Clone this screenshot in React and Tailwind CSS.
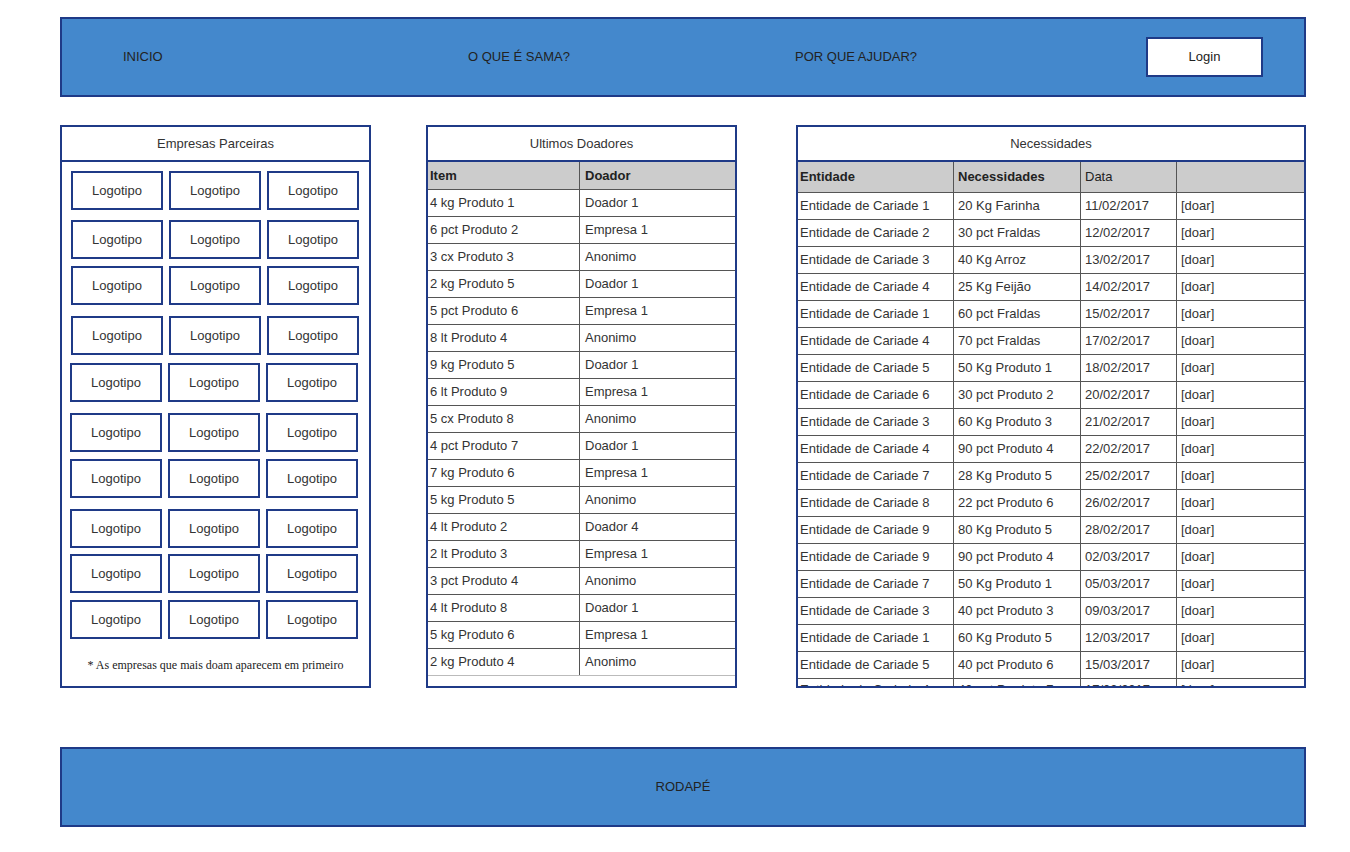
import React from 'react';

const doadores = [
  ['4 kg Produto 1', 'Doador 1'],
  ['6 pct Produto 2', 'Empresa 1'],
  ['3 cx Produto 3', 'Anonimo'],
  ['2 kg Produto 5', 'Doador 1'],
  ['5 pct Produto 6', 'Empresa 1'],
  ['8 lt Produto 4', 'Anonimo'],
  ['9 kg Produto 5', 'Doador 1'],
  ['6 lt Produto 9', 'Empresa 1'],
  ['5 cx Produto 8', 'Anonimo'],
  ['4 pct Produto 7', 'Doador 1'],
  ['7 kg Produto 6', 'Empresa 1'],
  ['5 kg Produto 5', 'Anonimo'],
  ['4 lt Produto 2', 'Doador 4'],
  ['2 lt Produto 3', 'Empresa 1'],
  ['3 pct Produto 4', 'Anonimo'],
  ['4 lt Produto 8', 'Doador 1'],
  ['5 kg Produto 6', 'Empresa 1'],
  ['2 kg Produto 4', 'Anonimo'],
];

const necessidades = [
  ['Entidade de Cariade 1', '20 Kg Farinha', '11/02/2017'],
  ['Entidade de Cariade 2', '30 pct Fraldas', '12/02/2017'],
  ['Entidade de Cariade 3', '40 Kg Arroz', '13/02/2017'],
  ['Entidade de Cariade 4', '25 Kg Feijão', '14/02/2017'],
  ['Entidade de Cariade 1', '60 pct Fraldas', '15/02/2017'],
  ['Entidade de Cariade 4', '70 pct Fraldas', '17/02/2017'],
  ['Entidade de Cariade 5', '50 Kg Produto 1', '18/02/2017'],
  ['Entidade de Cariade 6', '30 pct Produto 2', '20/02/2017'],
  ['Entidade de Cariade 3', '60 Kg Produto 3', '21/02/2017'],
  ['Entidade de Cariade 4', '90 pct Produto 4', '22/02/2017'],
  ['Entidade de Cariade 7', '28 Kg Produto 5', '25/02/2017'],
  ['Entidade de Cariade 8', '22 pct Produto 6', '26/02/2017'],
  ['Entidade de Cariade 9', '80 Kg Produto 5', '28/02/2017'],
  ['Entidade de Cariade 9', '90 pct Produto 4', '02/03/2017'],
  ['Entidade de Cariade 7', '50 Kg Produto 1', '05/03/2017'],
  ['Entidade de Cariade 3', '40 pct Produto 3', '09/03/2017'],
  ['Entidade de Cariade 1', '60 Kg Produto 5', '12/03/2017'],
  ['Entidade de Cariade 5', '40 pct Produto 6', '15/03/2017'],
];

// the mockup rows are hand placed, so each row keeps its own offset
const logoRows = [
  'mt-[9px] pl-[9px]',
  'mt-[10px] pl-[9px]',
  'mt-[7px] pl-[9px]',
  'mt-[11px] pl-[9px]',
  'mt-[8px] pl-[8px]',
  'mt-[11px] pl-[8px]',
  'mt-[7px] pl-[8px]',
  'mt-[11px] pl-[8px]',
  'mt-[6px] pl-[8px]',
  'mt-[7px] pl-[8px]',
];

function Logo() {
  return (
    <div className="w-[92px] h-[39px] border-2 border-[#1f3a87] bg-white flex items-center justify-center text-[13px] text-[#333]">
      Logotipo
    </div>
  );
}

function PanelTitle({ children }) {
  return (
    <div className="h-[35px] border-b-2 border-[#1f3a87] flex items-center justify-center text-[13px] text-[#333] shrink-0">
      {children}
    </div>
  );
}

function NecRow({ cells, last }) {
  const [ent, nec, data] = cells;
  const cell = last ? 'pt-[4px] leading-[13px]' : 'items-center';
  return (
    <div className="h-[27px] flex text-[13px] border-b border-[#555] shrink-0">
      <div className={'w-[156px] border-r border-[#555] pl-[2px] flex ' + cell}>{ent}</div>
      <div className={'w-[127px] border-r border-[#555] pl-[4px] flex ' + cell}>{nec}</div>
      <div className={'w-[96px] border-r border-[#555] pl-[4px] flex ' + cell}>{data}</div>
      <div className={'flex-1 pl-[4px] flex ' + cell}>[doar]</div>
    </div>
  );
}

export default function App() {
  return (
    <div className="w-[1350px] h-[852px] bg-white font-['Liberation_Sans',Arial,sans-serif] text-[#333] overflow-hidden">
      {/* Topo */}
      <header className="ml-[60px] mt-[17px] w-[1246px] h-[80px] bg-[#4488cc] border-2 border-[#1f3a87] flex items-center text-[13px] text-[#222]">
        <span className="ml-[61px] w-[345px]">INICIO</span>
        <span className="w-[327px]">O QUE É SAMA?</span>
        <span className="w-[351px]">POR QUE AJUDAR?</span>
        <button className="w-[117px] h-[40px] bg-white border-2 border-[#1f3a87] text-[13px] text-[#222]">
          Login
        </button>
      </header>

      <main className="ml-[60px] mt-[28px] flex items-start">
        {/* Empresas */}
        <section className="w-[311px] h-[563px] border-2 border-[#1f3a87] flex flex-col">
          <PanelTitle>Empresas Parceiras</PanelTitle>
          {logoRows.map((cls, i) => (
            <div key={i} className={'flex gap-x-[6px] ' + cls}>
              <Logo />
              <Logo />
              <Logo />
            </div>
          ))}
          <p className="mt-[17px] text-center text-[12px] font-['Liberation_Serif','Times_New_Roman',serif] text-[#222]">
            * As empresas que mais doam aparecem em primeiro
          </p>
        </section>

        {/* Doadores */}
        <section className="ml-[55px] w-[311px] h-[563px] border-2 border-[#1f3a87] flex flex-col overflow-hidden">
          <PanelTitle>Ultimos Doadores</PanelTitle>
          <div className="h-[28px] bg-[#cccccc] flex text-[13px] font-bold text-[#222] border-b border-[#555] shrink-0">
            <div className="w-[152px] border-r border-[#555] pl-[2px] flex items-center">Item</div>
            <div className="flex-1 pl-[5px] flex items-center">Doador</div>
          </div>
          {doadores.map(([item, doador], i) => (
            <div
              key={i}
              className={
                'h-[27px] flex text-[13px] border-b shrink-0 ' +
                (i === doadores.length - 1 ? 'border-[#bbb]' : 'border-[#555]')
              }
            >
              <div className="w-[152px] border-r border-[#555] pl-[2px] flex items-center">{item}</div>
              <div className="flex-1 pl-[5px] flex items-center">{doador}</div>
            </div>
          ))}
        </section>

        {/* Necessidades */}
        <section className="ml-[59px] w-[510px] h-[563px] border-2 border-[#1f3a87] flex flex-col overflow-hidden">
          <PanelTitle>Necessidades</PanelTitle>
          <div className="h-[31px] bg-[#cccccc] flex text-[13px] text-[#222] border-b border-[#555] shrink-0">
            <div className="w-[156px] border-r border-[#555] pl-[2px] flex items-center font-bold">Entidade</div>
            <div className="w-[127px] border-r border-[#555] pl-[4px] flex items-center font-bold">Necessidades</div>
            <div className="w-[96px] border-r border-[#555] pl-[4px] flex items-center">Data</div>
            <div className="flex-1" />
          </div>
          {necessidades.map((cells, i) => (
            <NecRow key={i} cells={cells} />
          ))}
          <NecRow cells={['Entidade de Cariade 4', '40 pct Produto 7', '17/03/2017']} last />
        </section>
      </main>

      {/* Rodapé */}
      <footer className="ml-[60px] mt-[59px] w-[1246px] h-[80px] bg-[#4488cc] border-2 border-[#1f3a87] flex items-center justify-center text-[13px] text-[#222]">
        RODAPÉ
      </footer>
    </div>
  );
}
